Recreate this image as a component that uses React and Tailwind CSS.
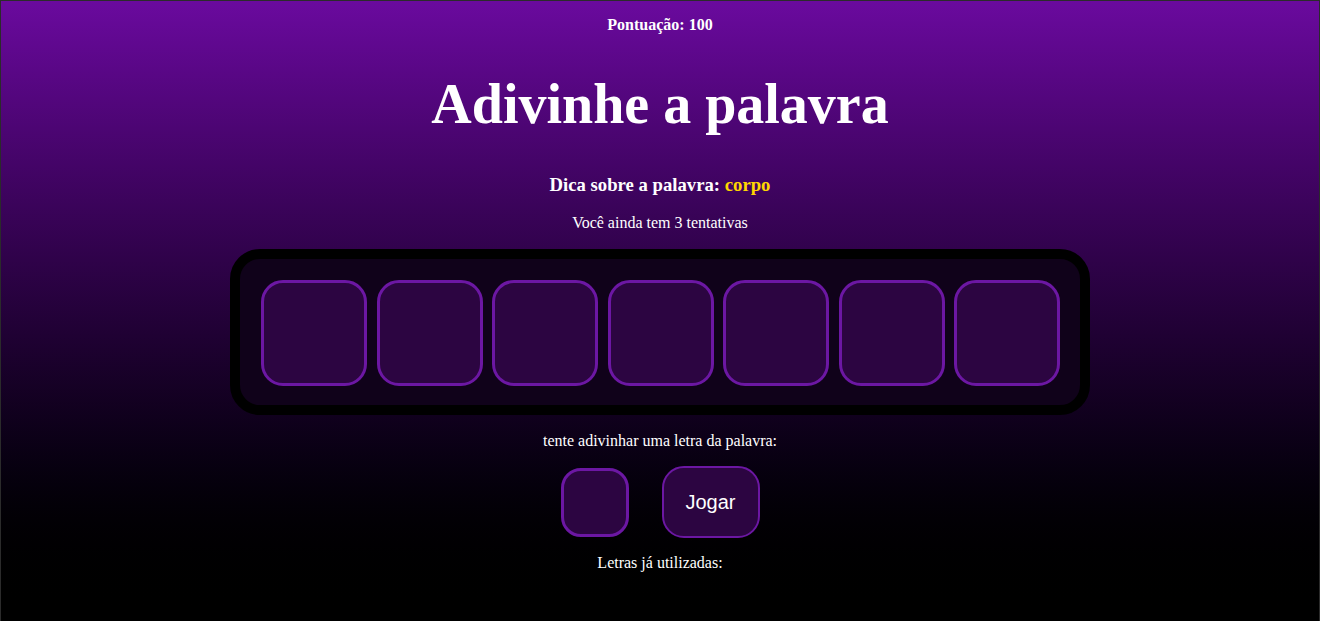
export default function App() {
  const slots = [0, 1, 2, 3, 4, 5, 6];
  return (
    <div
      className="h-[621px] w-full overflow-hidden border-x border-t border-[#2b2b2b] bg-gradient-to-b from-[#6a0a9e] to-[#000000] text-white flex flex-col items-center"
      style={{ fontFamily: '"Liberation Serif", "Times New Roman", serif' }}
    >
      <h4 className="mt-[15px] text-[16px] font-bold leading-[18px]">Pontuação: 100</h4>

      <h1 className="mt-[39px] text-[56px] font-bold leading-[62px]">Adivinhe a palavra</h1>

      <h3 className="mt-[39px] text-[18.72px] font-bold leading-[22px]">
        Dica sobre a palavra: <span className="text-[#ffd700]">corpo</span>
      </h3>

      <p className="mt-[18px] text-[16px] leading-[18px]">Você ainda tem 3 tentativas</p>

      {/* letras da palavra */}
      <div className="mt-[17px] w-[860px] h-[166px] rounded-[30px] border-[10px] border-black bg-[#10021a] pl-[21px] pt-[21px]">
        <div className="flex gap-[9.5px]">
          {slots.map((i) => (
            <div
              key={i}
              className="w-[106px] h-[106px] rounded-[22px] border-[3px] border-[#6c17a3] bg-[#2c0541]"
            />
          ))}
        </div>
      </div>

      <p className="mt-[17px] text-[16px] leading-[18px]">tente adivinhar uma letra da palavra:</p>

      <div className="mt-[16px] flex items-center gap-[33px]">
        <input
          type="text"
          maxLength={1}
          className="w-[68px] h-[69px] rounded-[20px] border-[3px] border-[#6c17a3] bg-[#2c0541] outline-none text-center text-white"
        />
        <button
          className="w-[98px] h-[72px] rounded-[22px] border-2 border-[#6c17a3] bg-[#2c0541] text-[20px] text-white"
          style={{ fontFamily: '"Liberation Sans", Arial, sans-serif' }}
        >
          Jogar
        </button>
      </div>

      <p className="mt-[16px] text-[16px] leading-[18px]">Letras já utilizadas:</p>
    </div>
  );
}
